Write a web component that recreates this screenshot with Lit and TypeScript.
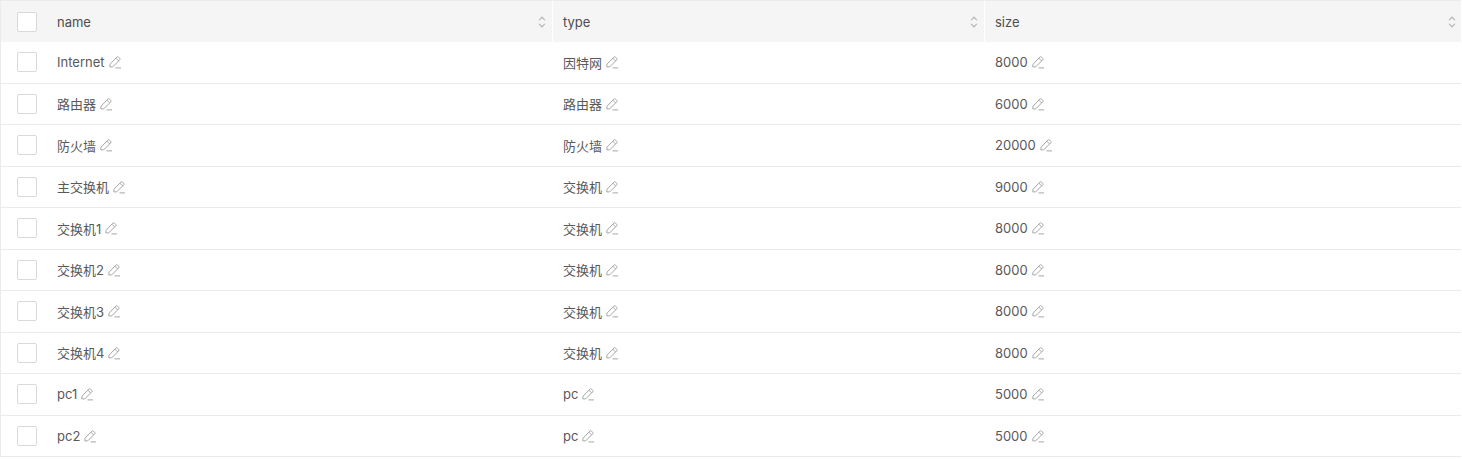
import { LitElement, html, css, svg } from "lit";
import { customElement } from "lit/decorators.js";

const rows = [
  ["Internet", "因特网", "8000"],
  ["路由器", "路由器", "6000"],
  ["防火墙", "防火墙", "20000"],
  ["主交换机", "交换机", "9000"],
  ["交换机1", "交换机", "8000"],
  ["交换机2", "交换机", "8000"],
  ["交换机3", "交换机", "8000"],
  ["交换机4", "交换机", "8000"],
  ["pc1", "pc", "5000"],
  ["pc2", "pc", "5000"],
];

const pencil = html`<svg class="edit" width="14" height="14" viewBox="0 0 14 14" fill="none" stroke="#a6a6a6" stroke-width="1">
  <path d="M2 9.2 8.9 2.1a1.1 1.1 0 0 1 1.6 0l1.2 1.2a1.1 1.1 0 0 1 0 1.6L4.7 11.9H1.8Z"/>
  <path d="M7.9 3.2 10.6 5.9"/>
  <path d="M7.5 12.9H13"/>
</svg>`;

const sorter = svg`<svg class="sort" width="10" height="14" viewBox="0 0 10 14" fill="#b3b3b3">
  <path d="M5 1.2 8.6 5.2H7.2L5 2.9 2.8 5.2H1.4Z"/>
  <path d="M5 12.8 1.4 8.8H2.8L5 11.1 7.2 8.8H8.6Z"/>
</svg>`;

@customElement("app-root")
export class AppRoot extends LitElement {
  static styles = css`
    :host {
      display: block;
      font-family: Inter, "Noto Sans CJK SC", sans-serif;
      font-size: 13px;
      color: #595959;
    }
    .table {
      border-left: 1px solid #ebebeb;
      border-top: 1px solid #ebebeb;
      width: 1461px;
      box-sizing: border-box;
    }
    .row,
    .head {
      display: grid;
      grid-template-columns: 46px 506px 432px 1fr;
    }
    .head {
      height: 41px;
      background: #f5f5f5;
      color: #4d4d4d;
    }
    .row {
      height: 41.5px;
      border-bottom: 1px solid #ebebeb;
      box-sizing: border-box;
    }
    .cell {
      display: flex;
      align-items: center;
      padding-left: 10px;
      gap: 3px;
      min-width: 0;
    }
    .head .cell {
      justify-content: space-between;
      padding-right: 5px;
      border-right: 1px solid #fff;
    }
    .head .cell:last-child {
      border-right: 0;
      padding-right: 4px;
    }
    .head .check-cell {
      border-right: 0;
      padding: 0;
      justify-content: flex-start;
    }
    .check-cell {
      padding-left: 16px;
    }
    .head .check-cell {
      padding-left: 16px;
    }
    .box {
      width: 20px;
      height: 20px;
      box-sizing: border-box;
      border: 1px solid #d9d9d9;
      border-radius: 2px;
      background: #fff;
    }
    .edit,
    .sort {
      flex: none;
    }
  `;

  render() {
    return html`<div class="table">
      <div class="head">
        <div class="cell check-cell"><div class="box"></div></div>
        <div class="cell"><span>name</span>${sorter}</div>
        <div class="cell"><span>type</span>${sorter}</div>
        <div class="cell"><span>size</span>${sorter}</div>
      </div>
      ${rows.map(
        (r) => html`<div class="row">
          <div class="cell check-cell"><div class="box"></div></div>
          ${r.map((t) => html`<div class="cell"><span>${t}</span>${pencil}</div>`)}
        </div>`
      )}
    </div>`;
  }
}
